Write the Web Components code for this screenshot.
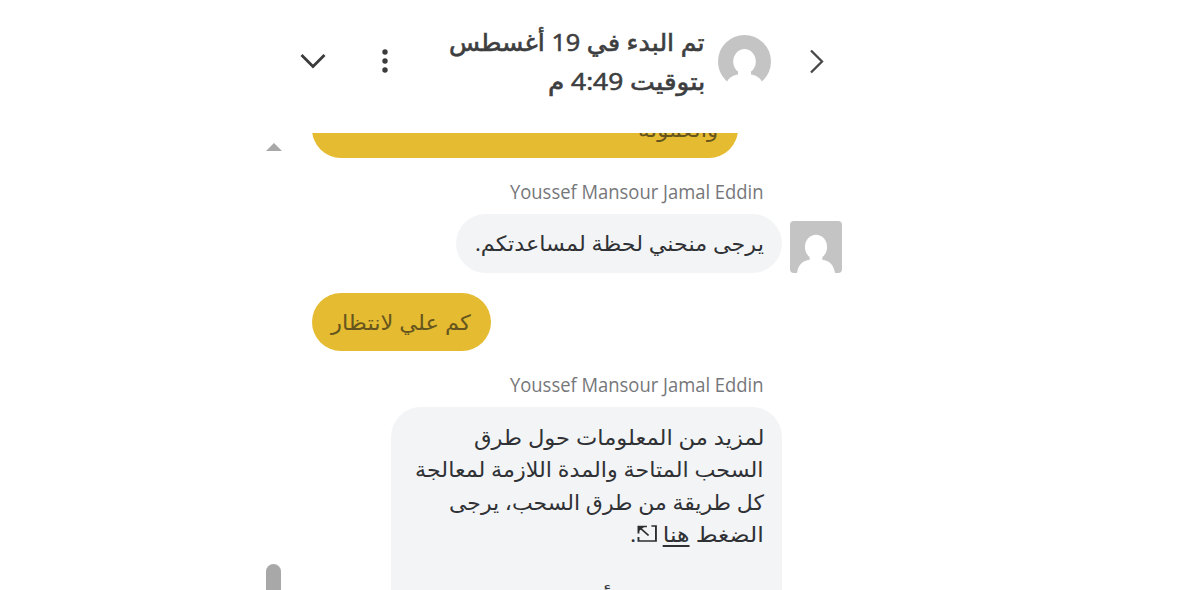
<!DOCTYPE html>
<html lang="ar" dir="rtl">
<head>
<meta charset="utf-8">
<title>المحادثة</title>
<style>
  body {
    margin: 0;
    background: #fff;
    font-family: "Open Sans", "DejaVu Sans", sans-serif;
    overflow: hidden;
  }
  u { text-underline-offset: 3px; text-decoration-thickness: 1.5px; }
</style>
</head>
<body>
<chat-window>
  <chat-header slot="header">
    <text-line width="256">تم البدء في 19 أغسطس</text-line>
    <text-line width="157">بتوقيت 4:49 م</text-line>
  </chat-header>

  <chat-message kind="user" class="first">
    <text-line width="80">والعمولة</text-line>
  </chat-message>
  <chat-message kind="agent" name="Youssef Mansour Jamal Eddin" avatar>
    <text-line width="289">يرجى منحني لحظة لمساعدتكم.</text-line>
  </chat-message>
  <chat-message kind="user">
    <text-line width="140">كم علي لانتظار</text-line>
  </chat-message>
  <chat-message kind="agent" name="Youssef Mansour Jamal Eddin" class="long">
    <text-line width="290">لمزيد من المعلومات حول طرق</text-line>
    <text-line width="349">السحب المتاحة والمدة اللازمة لمعالجة</text-line>
    <text-line width="315">كل طريقة من طرق السحب، يرجى</text-line>
    <text-line width="134">الضغط <u>هنا</u> <link-icon></link-icon>.</text-line>
    <text-line></text-line>
    <text-line width="207">كما يمكنكم أيضا</text-line>
  </chat-message>
</chat-window>

<script>
  // One line of text, fitted to the given width
  class TextLine extends HTMLElement {
    constructor() {
      super();
      this.attachShadow({ mode: "open" });
      this.shadowRoot.innerHTML = `
        <style>
          :host {
            display: block;
            height: var(--line, 32.3px);
            line-height: var(--line, 32.3px);
            white-space: nowrap;
          }
          span {
            display: inline-block;
            transform-origin: 100% 50%;
          }
        </style>
        <span><slot></slot></span>
      `;
    }

    connectedCallback() {
      const width = Number(this.getAttribute("width"));
      if (!width) return;
      const span = this.shadowRoot.querySelector("span");
      const natural = span.offsetWidth;
      this.style.width = width + "px";
      span.style.transform = `scaleX(${width / natural})`;
    }
  }

  class LinkIcon extends HTMLElement {
    constructor() {
      super();
      this.attachShadow({ mode: "open" });
      this.shadowRoot.innerHTML = `
        <style>
          :host { display: inline-block; width: 18px; height: 17px; }
          svg { display: block; }
        </style>
        <svg width="18" height="17" viewBox="0 0 18 17" fill="none" stroke="#2b2e31" stroke-width="1.7">
          <path d="M13 1h4v15H1.5v-4"/>
          <path d="M10.5 10.5 3 3M1.5 8.5V1.5H9"/>
          <path d="M1.5 1.5H7l-5.5 5z" fill="#2b2e31" stroke="none"/>
        </svg>
      `;
    }
  }

  class UserAvatar extends HTMLElement {
    constructor() {
      super();
      this.attachShadow({ mode: "open" });
    }

    connectedCallback() {
      const radius = this.hasAttribute("round") ? 26.5 : 4;
      this.shadowRoot.innerHTML = `
        <style>
          :host {
            display: block;
            width: var(--size, 53px);
            height: var(--size, 53px);
            flex: none;
          }
          svg { display: block; width: 100%; height: 100%; }
        </style>
        <svg viewBox="0 0 53 53">
          <rect width="53" height="53" rx="${radius}" fill="#c4c4c4"/>
          <ellipse cx="26.5" cy="26.5" rx="11.3" ry="12.5" fill="#fff"/>
          <path d="M20 34h13v5.500c7 1 12 5 13 14.500H7c1-9.500 6-13.500 13-14.500z" fill="#fff"/>
        </svg>
      `;
    }
  }

  class ChatHeader extends HTMLElement {
    constructor() {
      super();
      this.attachShadow({ mode: "open" });
      this.shadowRoot.innerHTML = `
        <style>
          :host {
            display: flex;
            align-items: flex-start;
            height: 133px;
            box-sizing: border-box;
            padding: 22px 17px 0 42px;
            color: #3d3e40;
            font-size: 24px;
            font-weight: 500;
            -webkit-text-stroke: 0.6px #3d3e40;
            --line: 39px;
          }
          svg { display: block; flex: none; }
          .back { margin: 26px 0 0 38px; }
          user-avatar { margin-top: 13px; }
          .title { margin-right: 13px; flex: 1; }
          .more { margin: 26px 0 0 55px; }
          .down { margin-top: 31px; }
        </style>
        <svg class="back" width="16" height="26" viewBox="0 0 16 26" fill="none" stroke="#484848" stroke-width="2.3">
          <path d="M2 2.5 13 13.5 2 24.5"/>
        </svg>
        <user-avatar round></user-avatar>
        <div class="title"><slot></slot></div>
        <svg class="more" width="8" height="26" viewBox="0 0 8 26" fill="#3b3b3b">
          <circle cx="4" cy="4" r="2.7"/>
          <circle cx="4" cy="13" r="2.7"/>
          <circle cx="4" cy="22" r="2.7"/>
        </svg>
        <svg class="down" width="26" height="18" viewBox="0 0 26 18" fill="none" stroke="#3b3b3b" stroke-width="2.8">
          <path d="M1.500 2 13 13.500 24.500 2"/>
        </svg>
      `;
    }
  }

  class ChatMessage extends HTMLElement {
    constructor() {
      super();
      this.attachShadow({ mode: "open" });
    }

    connectedCallback() {
      this.render();
    }

    render() {
      const name = this.getAttribute("name");
      const avatar = this.hasAttribute("avatar");

      this.shadowRoot.innerHTML = `
        <style>
          :host {
            display: block;
            margin-bottom: 20px;
            font-size: 21px;
          }
          .name {
            --line: 28px;
            margin-right: 78px;
            height: 36px;
            font-size: 20px;
            color: #76777a;
          }
          .row {
            display: flex;
            align-items: flex-end;
          }
          user-avatar { --size: 52px; margin-left: 8px; }
          .bubble {
            box-sizing: border-box;
            min-height: 59px;
            padding: 13px 18px 13px 19px;
            border-radius: 30px;
            background: #f3f4f6;
            color: #2f3134;
          }
          :host([kind="agent"]:not([avatar])) .row { padding-right: 60px; }
          :host([kind="user"]) .row {
            justify-content: flex-end;
            padding-left: 54px;
          }
          :host([kind="user"]) .bubble {
            background: #e4bb31;
            color: #66551d;
            min-height: 58px;
            padding: 13px 20px 12px 19px;
          }
          :host(.first) .row { margin-top: -33px; }
          :host(.first) .bubble { width: 426px; }
          :host(.long) .bubble { width: 391px; padding-top: 14px; }
        </style>
        ${name ? `<div class="name"><text-line width="254">${name}</text-line></div>` : ""}
        <div class="row">
          ${avatar ? "<user-avatar></user-avatar>" : ""}
          <div class="bubble"><slot></slot></div>
        </div>
      `;
    }
  }

  class ChatWindow extends HTMLElement {
    constructor() {
      super();
      this.attachShadow({ mode: "open" });
      this.shadowRoot.innerHTML = `
        <style>
          :host {
            display: flex;
            flex-direction: column;
            width: 584px;
            height: 590px;
            margin-right: 358px;
          }
          .body {
            display: flex;
            flex: 1;
            min-height: 0;
          }
          .list {
            flex: 1;
            min-width: 0;
            overflow: hidden;
            margin-left: -24px;
          }
          .scrollbar {
            display: flex;
            flex-direction: column;
            justify-content: space-between;
            width: 24px;
            padding-top: 9px;
            box-sizing: border-box;
          }
          .scrollbar svg { display: block; }
          .thumb {
            width: 15px;
            height: 26px;
            border-radius: 8px 8px 0 0;
            background: #a8a8a8;
            margin-right: 1px;
          }
        </style>
        <slot name="header"></slot>
        <div class="body">
          <div class="list"><slot></slot></div>
          <div class="scrollbar">
            <svg width="16" height="9" viewBox="0 0 16 9"><path d="M0 9 8 1l8 8z" fill="#a8a8a8"/></svg>
            <div class="thumb"></div>
          </div>
        </div>
      `;
    }
  }

  customElements.define("link-icon", LinkIcon);
  customElements.define("user-avatar", UserAvatar);
  customElements.define("chat-header", ChatHeader);
  customElements.define("chat-message", ChatMessage);
  customElements.define("chat-window", ChatWindow);
  // last, so that lines are measured with the final font sizes
  customElements.define("text-line", TextLine);
</script>
</body>
</html>
